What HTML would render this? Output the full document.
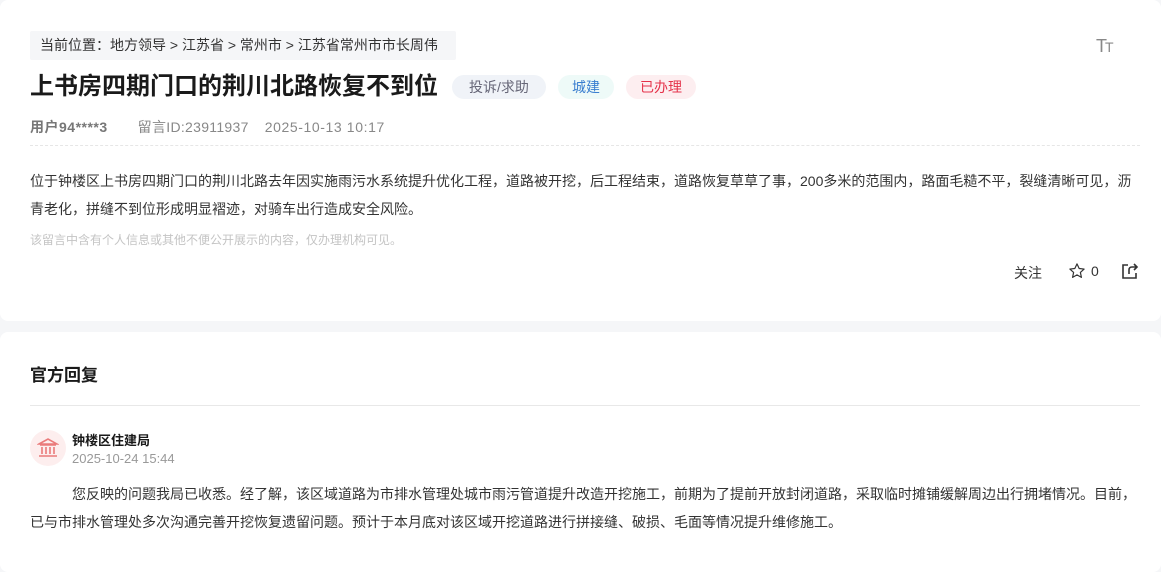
<!DOCTYPE html>
<html><head><meta charset="utf-8"><style>
*{margin:0;padding:0;box-sizing:border-box}
body{width:1161px;height:558px;background:#f5f6f8;font-family:"Liberation Sans","Noto Sans CJK SC",sans-serif;position:relative;overflow:hidden;color:#333}
.card{position:absolute;left:0;width:1161px;background:#fff;border-radius:8px}
.a{position:absolute;white-space:nowrap}
.tag{position:absolute;height:24px;line-height:24px;border-radius:12px;font-size:14px;text-align:center;top:75px}
</style></head><body>
<div class="card" style="top:0;height:321px"></div>
<div class="card" style="top:332px;height:240px"></div>

<div class="a" style="left:30px;top:31px;height:29px;width:426px;background:#f5f6f8;border-radius:2px;font-size:14px;line-height:29px;padding-left:10px;color:#333">当前位置：地方领导 &gt; 江苏省 &gt; 常州市 &gt; 江苏省常州市市长周伟</div>
<div class="a" style="left:1096px;top:36px;font-size:18px;color:#888;letter-spacing:-2px">T<span style="font-size:14px">T</span></div>

<div class="a" style="left:30px;top:70px;font-size:24px;font-weight:bold;color:#1a1a1a;line-height:34px">上书房四期门口的荆川北路恢复不到位</div>
<div class="tag" style="left:452px;width:94px;background:#f0f3f8;color:#667">投诉/求助</div>
<div class="tag" style="left:558px;width:56px;background:#eefaf8;color:#3b7fd0">城建</div>
<div class="tag" style="left:626px;width:70px;background:#fdeef0;color:#e5334b">已办理</div>

<div class="a" style="left:30px;top:118px;font-size:14px;color:#888;line-height:18px"><b style="color:#777;letter-spacing:0.5px">用户94****3</b><span style="margin-left:30px;letter-spacing:0.3px">留言ID:23911937</span><span style="margin-left:16px;letter-spacing:0.6px">2025-10-13 10:17</span></div>
<div class="a" style="left:30px;top:145px;width:1110px;border-top:1px dashed #e6e6e6"></div>

<div class="a" style="left:30px;top:167px;width:1112px;white-space:normal;font-size:14px;line-height:28px;color:#333">位于钟楼区上书房四期门口的荆川北路去年因实施雨污水系统提升优化工程，道路被开挖，后工程结束，道路恢复草草了事，200多米的范围内，路面毛糙不平，裂缝清晰可见，沥青老化，拼缝不到位形成明显褶迹，对骑车出行造成安全风险。</div>
<div class="a" style="left:30px;top:231px;font-size:12px;color:#c4c4c4">该留言中含有个人信息或其他不便公开展示的内容，仅办理机构可见。</div>

<div class="a" style="left:1014px;top:263px;font-size:14px;color:#333">关注</div>
<svg class="a" style="left:1068px;top:262px" width="18" height="18" viewBox="0 0 24 24"><path d="M12 2.5l2.9 6.2 6.6.7-5 4.5 1.4 6.6L12 17.2l-5.9 3.3 1.4-6.6-5-4.5 6.6-.7z" fill="none" stroke="#333" stroke-width="1.6" stroke-linejoin="round"/></svg>
<div class="a" style="left:1091px;top:263px;font-size:14px;color:#333">0</div>
<svg class="a" style="left:1121px;top:262px" width="18" height="18" viewBox="0 0 18 18"><path d="M7 3H2v13h13v-5" fill="none" stroke="#333" stroke-width="1.6"/><path d="M8 12V8c0-2 1-3 3-3h5M13 2l3 3-3 3" fill="none" stroke="#333" stroke-width="1.6"/></svg>

<div class="a" style="left:30px;top:361px;font-size:17px;font-weight:bold;color:#1a1a1a">官方回复</div>
<div class="a" style="left:30px;top:405px;width:1110px;border-top:1px solid #e8e8e8"></div>

<div class="a" style="left:30px;top:430px;width:36px;height:36px;border-radius:50%;background:#fdeeee"></div>
<svg class="a" style="left:37px;top:437px" width="22" height="22" viewBox="0 0 22 22"><path d="M2 7L11 2l9 5z M3 8h16 M5 10v7 M9 10v7 M13 10v7 M17 10v7 M2 19h18" fill="none" stroke="#ea7a7a" stroke-width="1.6"/></svg>
<div class="a" style="left:72px;top:430px;font-size:13px;font-weight:bold;color:#1a1a1a">钟楼区住建局</div>
<div class="a" style="left:72px;top:451px;font-size:13px;color:#999">2025-10-24 15:44</div>

<div class="a" style="left:30px;top:480px;width:1112px;white-space:normal;font-size:14px;line-height:28px;color:#333;text-indent:42px">您反映的问题我局已收悉。经了解，该区域道路为市排水管理处城市雨污管道提升改造开挖施工，前期为了提前开放封闭道路，采取临时摊铺缓解周边出行拥堵情况。目前，已与市排水管理处多次沟通完善开挖恢复遗留问题。预计于本月底对该区域开挖道路进行拼接缝、破损、毛面等情况提升维修施工。</div>
</body></html>
